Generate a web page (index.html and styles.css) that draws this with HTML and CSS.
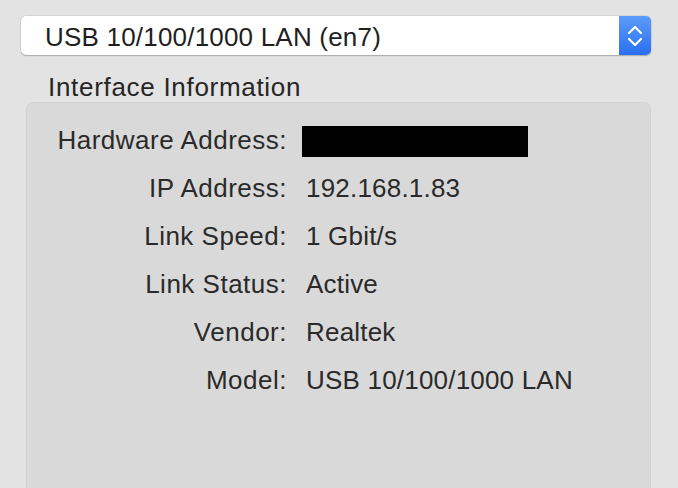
FILE: index.html
```html
<!DOCTYPE html>
<html>
<head>
<meta charset="utf-8">
<link rel="stylesheet" href="styles.css">
</head>
<body>
<div class="wrap">
  <div class="popup">
    <div class="popup-label">USB 10/100/1000 LAN (en7)</div>
    <div class="stepper">
      <svg width="20" height="30" viewBox="0 0 20 30">
        <path d="M4 12 L10 6 L16 12" fill="none" stroke="#fff" stroke-width="2.2" stroke-linecap="round" stroke-linejoin="round"/>
        <path d="M4 18 L10 24 L16 18" fill="none" stroke="#fff" stroke-width="2.2" stroke-linecap="round" stroke-linejoin="round"/>
      </svg>
    </div>
  </div>
  <div class="section-title">Interface Information</div>
  <div class="panel">
    <div class="grid">
      <div class="label">Hardware Address:</div>
      <div class="value"><div class="redact"></div></div>
      <div class="label">IP Address:</div>
      <div class="value">192.168.1.83</div>
      <div class="label">Link Speed:</div>
      <div class="value">1 Gbit/s</div>
      <div class="label">Link Status:</div>
      <div class="value">Active</div>
      <div class="label">Vendor:</div>
      <div class="value">Realtek</div>
      <div class="label">Model:</div>
      <div class="value">USB 10/100/1000 LAN</div>
    </div>
  </div>
</div>
</body>
</html>
```

FILE: styles.css
```css
html, body {
  margin: 0;
  padding: 0;
}
body {
  width: 678px;
  height: 488px;
  overflow: hidden;
  background: #e3e3e3;
  font-family: "Liberation Sans", Arial, sans-serif;
  color: #262626;
}
.wrap {
  padding: 16px 27px 0 21px;
}
.popup {
  display: flex;
  height: 39px;
  background: #ffffff;
  border-radius: 5px;
  box-shadow: 0 0 0 0.5px rgba(0, 0, 0, 0.12), 0 1px 1.5px rgba(0, 0, 0, 0.22);
}
.popup-label {
  flex: 1;
  padding: 3px 0 0 24px;
  font-size: 26px;
  line-height: 36px;
  letter-spacing: 0.2px;
  color: #1f1f1f;
}
.stepper {
  width: 32px;
  display: flex;
  align-items: center;
  justify-content: center;
  border-radius: 0 5px 5px 0;
  background: linear-gradient(#5a9cf8, #2b6ff1);
}
.section-title {
  margin-top: 17px;
  padding-left: 27px;
  font-size: 26px;
  line-height: 30px;
  letter-spacing: 0.7px;
  color: #262626;
}
.panel {
  margin-left: 5px;
  height: 386px;
  background: #d9d9d9;
  border: 1px solid #d2d2d2;
  border-bottom: none;
  border-radius: 7px 7px 0 0;
  padding-top: 13px;
  box-sizing: border-box;
}
.grid {
  display: grid;
  grid-template-columns: 260px 1fr;
  column-gap: 19px;
  font-size: 26px;
  line-height: 48px;
}
.label {
  text-align: right;
  letter-spacing: 0.5px;
  color: #2a2a2a;
}
.value {
  color: #2a2a2a;
  letter-spacing: 0.2px;
  display: flex;
  align-items: center;
}
.redact {
  width: 226px;
  height: 31px;
  margin: 3px 0 0 -4px;
  background: #000;
}
```
